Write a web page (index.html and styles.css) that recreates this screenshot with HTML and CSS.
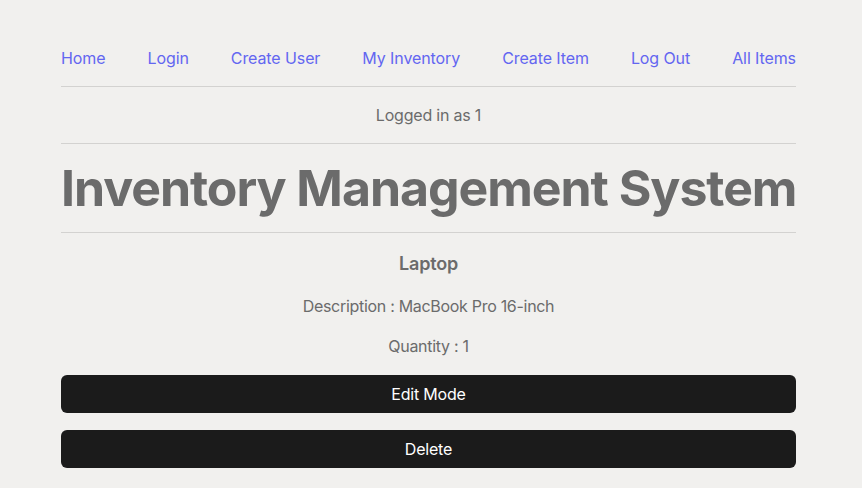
FILE: index.html
```html
<!DOCTYPE html>
<html>
<head>
<meta charset="utf-8">
<link rel="stylesheet" href="styles.css">
</head>
<body>
<div class="page">
  <nav class="nav">
    <a href="#">Home</a>
    <a href="#">Login</a>
    <a href="#">Create User</a>
    <a href="#">My Inventory</a>
    <a href="#">Create Item</a>
    <a href="#">Log Out</a>
    <a href="#">All Items</a>
  </nav>
  <p class="status">Logged in as 1</p>
  <h1 class="title">Inventory Management System</h1>
  <section class="item">
    <h2 class="item-name">Laptop</h2>
    <p class="item-line">Description : MacBook Pro 16-inch</p>
    <p class="item-line">Quantity : 1</p>
    <button class="btn">Edit Mode</button>
    <button class="btn">Delete</button>
  </section>
</div>
</body>
</html>
```
FILE: styles.css
```css
html, body {
  margin: 0;
  padding: 0;
  background: #f1f0ee;
}
body {
  font-family: Inter, "Noto Sans", sans-serif;
  color: #6b6b6b;
}
.page {
  width: 735px;
  margin-left: 61px;
  padding-top: 47px;
}
.nav {
  display: flex;
  justify-content: space-between;
  padding-bottom: 17px;
  border-bottom: 1px solid #d3d2d0;
}
.nav a {
  color: #6366f1;
  text-decoration: none;
  font-size: 16px;
  line-height: 22px;
  letter-spacing: -0.1px;
}
.status {
  margin: 0;
  text-align: center;
  font-size: 16px;
  line-height: 56px;
  letter-spacing: -0.2px;
  border-bottom: 1px solid #d3d2d0;
}
.title {
  margin: 0;
  text-align: center;
  font-size: 50px;
  font-weight: 700;
  line-height: 88px;
  letter-spacing: -1.05px;
  border-bottom: 1px solid #d3d2d0;
  white-space: nowrap;
}
.item {
  display: flex;
  flex-direction: column;
  align-items: center;
  padding-top: 19px;
}
.item-name {
  margin: 0;
  font-size: 18px;
  font-weight: 600;
  line-height: 24px;
  letter-spacing: -0.2px;
}
.item-line {
  margin: 19px 0 0;
  font-size: 16px;
  line-height: 22px;
  letter-spacing: -0.3px;
}
.item-line + .item-line {
  margin-top: 18px;
}
.btn {
  width: 100%;
  height: 38px;
  margin-top: 18px;
  background: #1b1b1b;
  color: #ffffff;
  border: none;
  border-radius: 6px;
  font-family: Inter, "Noto Sans", sans-serif;
  font-size: 16px;
  letter-spacing: -0.2px;
}
.btn + .btn {
  margin-top: 17px;
}
```
